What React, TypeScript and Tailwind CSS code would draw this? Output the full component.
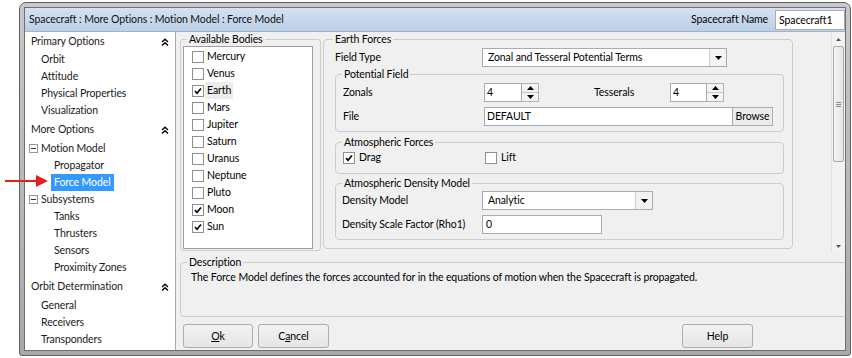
import React from "react";

function Check({ checked }: { checked?: boolean }) {
  return (
    <span className="w-[12px] h-[12px] border border-[#8e8f8f] bg-white flex items-center justify-center shrink-0">
      {checked && (
        <svg width="8" height="8" viewBox="0 0 8 8">
          <path d="M1 4.2 L3 6.3 L7 1.5" stroke="#000" strokeWidth="1.7" fill="none" />
        </svg>
      )}
    </span>
  );
}

function TriDown() {
  return (
    <svg width="7" height="4" viewBox="0 0 7 4">
      <path d="M0 0 L7 0 L3.5 4 Z" fill="#000" />
    </svg>
  );
}
function TriUp() {
  return (
    <svg width="7" height="4" viewBox="0 0 7 4">
      <path d="M0 4 L7 4 L3.5 0 Z" fill="#000" />
    </svg>
  );
}

function Select({ text, w }: { text: string; w: string }) {
  return (
    <div className={`flex h-[19px] border border-[#a5acb5] bg-white ${w}`}>
      <span className="flex-1 pl-[5px] leading-[17px]">{text}</span>
      <span className="w-[17px] border-l border-[#d0d0d0] bg-[#f3f3f3] flex items-center justify-center">
        <TriDown />
      </span>
    </div>
  );
}

function Spin({ value, w }: { value: string; w: string }) {
  return (
    <div className="flex h-[19px]">
      <span className={`border border-[#a5acb5] bg-white pl-[2px] leading-[17px] ${w}`}>{value}</span>
      <span className="w-[17px] flex flex-col border border-l-0 border-[#b5b5b5] bg-[#f3f3f3]">
        <span className="flex-1 flex items-center justify-center border-b border-[#c8c8c8]">
          <TriUp />
        </span>
        <span className="flex-1 flex items-center justify-center">
          <TriDown />
        </span>
      </span>
    </div>
  );
}

function Chevrons() {
  return (
    <svg width="8" height="8" viewBox="0 0 8 8">
      <path d="M1 4 L4 1.2 L7 4" stroke="#000" strokeWidth="1.4" fill="none" />
      <path d="M1 7.5 L4 4.7 L7 7.5" stroke="#000" strokeWidth="1.4" fill="none" />
    </svg>
  );
}

function Minus() {
  return (
    <span className="w-[9px] h-[9px] border border-[#979797] bg-white flex items-center justify-center">
      <span className="w-[5px] h-[1px] bg-[#333]" />
    </span>
  );
}

function Btn({ children, w }: { children: React.ReactNode; w: string }) {
  return (
    <div
      className={`h-[24px] ${w} border border-[#acacac] rounded-[3px] bg-gradient-to-b from-[#f2f2f2] to-[#e6e6e6] flex items-center justify-center`}
    >
      {children}
    </div>
  );
}

const bodies: [string, boolean][] = [
  ["Mercury", false],
  ["Venus", false],
  ["Earth", true],
  ["Mars", false],
  ["Jupiter", false],
  ["Saturn", false],
  ["Uranus", false],
  ["Neptune", false],
  ["Pluto", false],
  ["Moon", true],
  ["Sun", true],
];

export default function App() {
  return (
    <div className="w-[852px] h-[358px] bg-white relative overflow-hidden font-['Lato',sans-serif] text-[10.5px] tracking-[-0.1px] text-black leading-[17px]">
      {/* window frame */}
      <div className="ml-[19px] mt-[2px] w-[832px] h-[354px] rounded-t-[7px] rounded-b-[3px] border border-[#5f5f5f] bg-gradient-to-b from-[#c9c9c9] to-[#a8a8a8] p-[4px]">
        <div className="w-full h-full border border-[#6f6f6f] flex flex-col bg-white">
          {/* title bar */}
          <div className="h-[24px] shrink-0 flex items-center bg-gradient-to-b from-[#d4e2f1] to-[#bccfe5] border-b border-[#9fb3cb]">
            <span className="ml-[4px] text-[#111]">Spacecraft : More Options : Motion Model : Force Model</span>
            <span className="ml-auto mr-[7px]">Spacecraft Name</span>
            <span className="w-[70px] h-[20px] border border-[#abadb3] bg-white pl-[3px] leading-[18px]">Spacecraft1</span>
          </div>
          {/* body */}
          <div className="flex flex-1 min-h-0">
            {/* tree */}
            <div className="w-[151px] shrink-0 border-r border-[#a8a8a8] bg-white pt-[1px] text-[#1a1a1a]">
              <div className="h-[17px] flex items-center pl-[6px] pr-[6px]">
                <span>Primary Options</span>
                <span className="ml-auto"><Chevrons /></span>
              </div>
              <div className="mt-[1px] pl-[16px]">
                <div className="h-[17px]">Orbit</div>
                <div className="h-[17px]">Attitude</div>
                <div className="h-[17px]">Physical Properties</div>
                <div className="h-[17px]">Visualization</div>
              </div>
              <div className="mt-[2px] h-[17px] flex items-center pl-[6px] pr-[6px]">
                <span>More Options</span>
                <span className="ml-auto"><Chevrons /></span>
              </div>
              <div className="mt-[2px] h-[17px] flex items-center pl-[4px]">
                <Minus />
                <span className="ml-[3px]">Motion Model</span>
              </div>
              <div className="h-[17px] pl-[29px]">Propagator</div>
              <div className="h-[17px] pl-[26px] flex">
                <span className="bg-[#3399ff] text-white px-[3px] h-[17px]">Force Model</span>
              </div>
              <div className="h-[17px] flex items-center pl-[4px]">
                <Minus />
                <span className="ml-[3px]">Subsystems</span>
              </div>
              <div className="pl-[29px]">
                <div className="h-[17px]">Tanks</div>
                <div className="h-[17px]">Thrusters</div>
                <div className="h-[17px]">Sensors</div>
                <div className="h-[17px]">Proximity Zones</div>
              </div>
              <div className="mt-[2px] h-[17px] flex items-center pl-[6px] pr-[6px]">
                <span>Orbit Determination</span>
                <span className="ml-auto"><Chevrons /></span>
              </div>
              <div className="mt-[2px] pl-[16px]">
                <div className="h-[17px]">General</div>
                <div className="h-[17px]">Receivers</div>
                <div className="h-[17px]">Transponders</div>
              </div>
            </div>

            {/* right panel */}
            <div className="flex-1 min-w-0 bg-[#f0f0f0] flex flex-col overflow-hidden">
              <div className="h-[221px] shrink-0 flex">
                {/* Available bodies */}
                <fieldset className="ml-[4px] mt-[1px] w-[141px] h-[218px] border border-[#cdcdcd] rounded-[3px] shrink-0">
                  <legend className="ml-[6px] px-[2px] leading-[12px]">Available Bodies</legend>
                  <div className="ml-[2px] mt-[1px] w-[130px] h-[203px] border border-[#a0a0a0] bg-white pt-[1px] pl-[8px]">
                    {bodies.map(([n, c]) => (
                      <div key={n} className="h-[17px] flex items-center">
                        <Check checked={c} />
                        <span className={`ml-[1px] px-[2px] ${n === "Earth" ? "bg-[#ececec]" : ""}`}>{n}</span>
                      </div>
                    ))}
                  </div>
                </fieldset>

                {/* Earth forces */}
                <fieldset className="ml-[2px] mt-[1px] w-[470px] h-[216px] border border-[#cdcdcd] rounded-[4px] shrink-0">
                  <legend className="ml-[9px] px-[2px] leading-[12px]">Earth Forces</legend>
                  <div className="mt-[3px] h-[19px] flex items-center pl-[11px]">
                    <span className="w-[147px]">Field Type</span>
                    <Select text="Zonal and Tesseral Potential Terms" w="w-[245px]" />
                  </div>

                  <fieldset className="ml-[11px] mt-[1px] w-[449px] h-[64px] border border-[#cdcdcd] rounded-[4px]">
                    <legend className="ml-[6px] px-[2px] leading-[12px]">Potential Field</legend>
                    <div className="mt-[3px] h-[19px] flex items-center pl-[7px]">
                      <span className="w-[141px]">Zonals</span>
                      <Spin value="4" w="w-[38px]" />
                      <span className="ml-[55px] w-[76px]">Tesserals</span>
                      <Spin value="4" w="w-[37px]" />
                    </div>
                    <div className="mt-[5px] h-[19px] flex items-center pl-[7px]">
                      <span className="w-[141px]">File</span>
                      <span className="w-[249px] h-[19px] border border-[#a5acb5] bg-white pl-[2px] leading-[17px]">DEFAULT</span>
                      <span className="w-[40px] h-[19px] border border-l-0 border-[#acacac] bg-[#ececec] flex items-center justify-center">Browse</span>
                    </div>
                  </fieldset>

                  <fieldset className="ml-[11px] mt-[4px] w-[449px] h-[38px] border border-[#cdcdcd] rounded-[4px]">
                    <legend className="ml-[6px] px-[2px] leading-[12px]">Atmospheric Forces</legend>
                    <div className="mt-[1px] h-[17px] flex items-center pl-[7px]">
                      <span className="w-[142px] flex items-center">
                        <Check checked />
                        <span className="ml-[4px]">Drag</span>
                      </span>
                      <Check />
                      <span className="ml-[4px]">Lift</span>
                    </div>
                  </fieldset>

                  <fieldset className="ml-[11px] mt-[3px] w-[449px] h-[63px] border border-[#cdcdcd] rounded-[4px]">
                    <legend className="ml-[6px] px-[2px] leading-[12px]">Atmospheric Density Model</legend>
                    <div className="mt-[2px] h-[19px] flex items-center pl-[6px]">
                      <span className="w-[140px]">Density Model</span>
                      <Select text="Analytic" w="w-[171px]" />
                    </div>
                    <div className="mt-[5px] h-[19px] flex items-center pl-[6px]">
                      <span className="w-[140px]">Density Scale Factor (Rho1)</span>
                      <span className="w-[120px] h-[19px] border border-[#a5acb5] bg-white pl-[3px] leading-[17px]">0</span>
                    </div>
                  </fieldset>
                </fieldset>

                <div className="flex-1" />
                {/* scrollbar */}
                <div className="w-[14px] shrink-0 flex flex-col items-center border-l border-[#e2e2e2] bg-[#f2f2f2]">
                  <div className="h-[14px] flex items-center justify-center">
                    <svg width="5" height="3" viewBox="0 0 5 3"><path d="M0 3 L5 3 L2.5 0 Z" fill="#555" /></svg>
                  </div>
                  <div className="w-[11px] h-[116px] border border-[#a9a9a9] rounded-[2px] bg-gradient-to-r from-[#f4f4f4] to-[#e4e4e4] flex flex-col items-center justify-center gap-[1px]">
                    <span className="w-[5px] h-[1px] bg-[#888]" />
                    <span className="w-[5px] h-[1px] bg-[#888]" />
                    <span className="w-[5px] h-[1px] bg-[#888]" />
                  </div>
                  <div className="flex-1" />
                  <div className="h-[14px] flex items-center justify-center">
                    <svg width="5" height="3" viewBox="0 0 5 3"><path d="M0 0 L5 0 L2.5 3 Z" fill="#555" /></svg>
                  </div>
                </div>
              </div>

              {/* description */}
              <fieldset className="ml-[4px] mt-[3px] w-[700px] h-[61px] border border-[#cdcdcd] rounded-[4px] shrink-0">
                <legend className="ml-[6px] px-[2px] leading-[12px]">Description</legend>
                <div className="mt-[1px] ml-[10px]">
                  The Force Model defines the forces accounted for in the equations of motion when the Spacecraft is propagated.
                </div>
              </fieldset>

              {/* buttons */}
              <div className="mt-[7px] flex">
                <div className="ml-[7px]">
                  <Btn w="w-[70px]"><span><span className="underline">O</span>k</span></Btn>
                </div>
                <div className="ml-[5px]">
                  <Btn w="w-[71px]"><span>C<span className="underline">a</span>ncel</span></Btn>
                </div>
                <div className="ml-[353px]">
                  <Btn w="w-[71px]">Help</Btn>
                </div>
              </div>
            </div>
          </div>
        </div>
      </div>

      {/* red arrow */}
      <svg className="absolute left-[4px] top-[174px]" width="46" height="14" viewBox="0 0 46 14">
        <line x1="1" y1="7" x2="34" y2="7" stroke="#e3201b" strokeWidth="2" />
        <path d="M32 1 L44 7 L32 13 Z" fill="#e3201b" />
      </svg>
    </div>
  );
}
